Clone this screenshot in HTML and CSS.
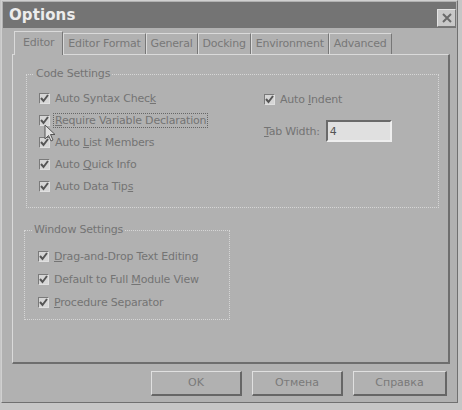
FILE: index.html
```html
<!DOCTYPE html>
<html lang="en">
<head>
	<meta charset="UTF-8">
	<title>Options</title>
	<link rel="stylesheet" href="styles.css">
</head>
<body>
	<div class="dialog">
		<div class="titlebar">
			<span class="title">Options</span>
			<span class="close"><svg width="12" height="12" viewBox="0 0 12 12"><path d="M2 2L10 10M10 2L2 10" stroke="#6a6a6a" stroke-width="2"/></svg></span>
		</div>
		<div class="tabs">
			<span class="tab on">Editor</span>
			<span class="tab">Editor Format</span>
			<span class="tab">General</span>
			<span class="tab">Docking</span>
			<span class="tab">Environment</span>
			<span class="tab">Advanced</span>
		</div>
		<div class="panel">
			<div class="group code">
				<span class="legend">Code Settings</span>
				<div class="cols">
					<div class="list">
						<label class="chk"><i class="box"></i><span>Auto Syntax Chec<u>k</u></span></label>
						<label class="chk"><i class="box"></i><span class="focus"><u>R</u>equire Variable Declaration</span></label>
						<label class="chk"><i class="box"></i><span>Auto <u>L</u>ist Members</span></label>
						<label class="chk"><i class="box"></i><span>Auto <u>Q</u>uick Info</span></label>
						<label class="chk"><i class="box"></i><span>Auto Data Tip<u>s</u></span></label>
					</div>
					<div class="side">
						<label class="chk"><i class="box"></i><span>Auto <u>I</u>ndent</span></label>
						<div class="field"><span><u>T</u>ab Width:</span><span class="input">4</span></div>
					</div>
				</div>
				<svg class="cursor" width="12" height="19" viewBox="0 0 12 19"><path d="M1 1L1 15L4.5 11.5L7 17L9 16L6.5 10.5L11 10.5Z" fill="#e0e0e0" stroke="#555" stroke-width="1"/></svg>
			</div>
			<div class="group window">
				<span class="legend">Window Settings</span>
				<div class="list">
					<label class="chk"><i class="box"></i><span><u>D</u>rag-and-Drop Text Editing</span></label>
					<label class="chk"><i class="box"></i><span>Default to Full <u>M</u>odule View</span></label>
					<label class="chk"><i class="box"></i><span><u>P</u>rocedure Separator</span></label>
				</div>
			</div>
		</div>
		<div class="buttons">
			<span class="btn ok">OK</span>
			<span class="btn cancel">Отмена</span>
			<span class="btn help">Справка</span>
		</div>
	</div>
</body>
</html>
```
FILE: styles.css
```css
*{
	margin: 0;
	padding: 0;
	box-sizing: border-box;
}
body{
	background: #c6c6c6;
	font-family: "DejaVu Sans", sans-serif;
	font-size: 10px;
	color: #747474;
}
.dialog{
	width: 457px;
	height: 403px;
	margin: 0 0 0 1px;
	background: #b1b1b1;
	border: 1px solid #d0d0d0;
	border-right-color: #707070;
	border-bottom-color: #707070;
	display: flex;
	flex-direction: column;
}
.titlebar{
	height: 26px;
	margin: 1px 1px 0 1px;
	background: #747474;
	display: flex;
	align-items: center;
	justify-content: space-between;
	padding: 0 0 0 6px;
}
.title{
	font-size: 15px;
	font-weight: bold;
	color: #ececec;
	letter-spacing: 0.1px;
}
.close{
	width: 19px;
	height: 18px;
	margin-top: 5px;
	background: #c8c8c8;
	border: 1px solid #e4e4e4;
	border-right-color: #777;
	border-bottom-color: #777;
	display: flex;
	align-items: center;
	justify-content: center;
}
.tabs{
	display: flex;
	align-items: flex-end;
	height: 26px;
	padding-left: 12px;
}
.tab{
	height: 21px;
	padding: 0 4px;
	line-height: 19px;
	border: 1px solid #dadada;
	border-bottom: none;
	border-right-color: #777;
	font-size: 11px;
	color: #787878;
	letter-spacing: -0.2px;
}
.tab.on{
	height: 24px;
	padding: 0 8px;
	line-height: 22px;
	margin-bottom: -1px;
	background: #b1b1b1;
	position: relative;
}
.panel{
	margin: 0 7px 0 10px;
	height: 310px;
	border: 1px solid #dadada;
	border-right: 2px solid #6e6e6e;
	border-bottom: 2px solid #6e6e6e;
	padding: 19px 9px 0 13px;
}
.group{
	position: relative;
	border: 1px dotted #d6d6d6;
}
.legend{
	position: absolute;
	top: -8px;
	left: 7px;
	padding: 0 2px;
	background: #b1b1b1;
	font-size: 11px;
	letter-spacing: -0.2px;
}
.code{
	height: 134px;
	padding: 17px 0 0 12px;
}
.cols{
	display: flex;
}
.list{
	display: flex;
	flex-direction: column;
	gap: 9px;
	width: 225px;
}
.chk{
	display: flex;
	align-items: center;
	height: 13px;
	font-size: 11px;
	letter-spacing: -0.2px;
	white-space: nowrap;
}
.box{
	width: 11px;
	height: 11px;
	margin-right: 5px;
	background: #d6d6d6 url("data:image/svg+xml,%3Csvg xmlns='http://www.w3.org/2000/svg' width='11' height='11'%3E%3Cpath d='M2 5L4.5 8L9 2' fill='none' stroke='%23555' stroke-width='2'/%3E%3C/svg%3E") no-repeat center;
	border: 1px solid #7a7a7a;
	border-right-color: #e0e0e0;
	border-bottom-color: #e0e0e0;
	flex-shrink: 0;
}
.focus{
	border: 1px dotted #666;
	padding: 0 1px;
	margin-left: -2px;
}
.side{
	display: flex;
	flex-direction: column;
	gap: 14px;
	padding-top: 1px;
}
.field{
	display: flex;
	align-items: center;
	gap: 6px;
	font-size: 11px;
	letter-spacing: -0.2px;
}
.input{
	width: 66px;
	height: 22px;
	background: #e0e0e0;
	border: 2px solid #6a6a6a;
	border-right-color: #eee;
	border-bottom-color: #eee;
	padding: 3px 2px;
	color: #555;
}
.cursor{
	position: absolute;
	left: 17px;
	top: 49px;
}
.window{
	width: 206px;
	height: 90px;
	margin: 22px 0 0 -2px;
	padding: 19px 0 0 13px;
}
.window .list{
	gap: 10px;
}
.buttons{
	display: flex;
	gap: 10px;
	padding: 7px 0 0 149px;
}
.btn{
	width: 91px;
	height: 25px;
	line-height: 22px;
	text-align: center;
	font-size: 11px;
	color: #7a7a7a;
	border: 1px solid #e0e0e0;
	border-right: 2px solid #666;
	border-bottom: 2px solid #666;
}
.help{
	width: 94px;
}
```
